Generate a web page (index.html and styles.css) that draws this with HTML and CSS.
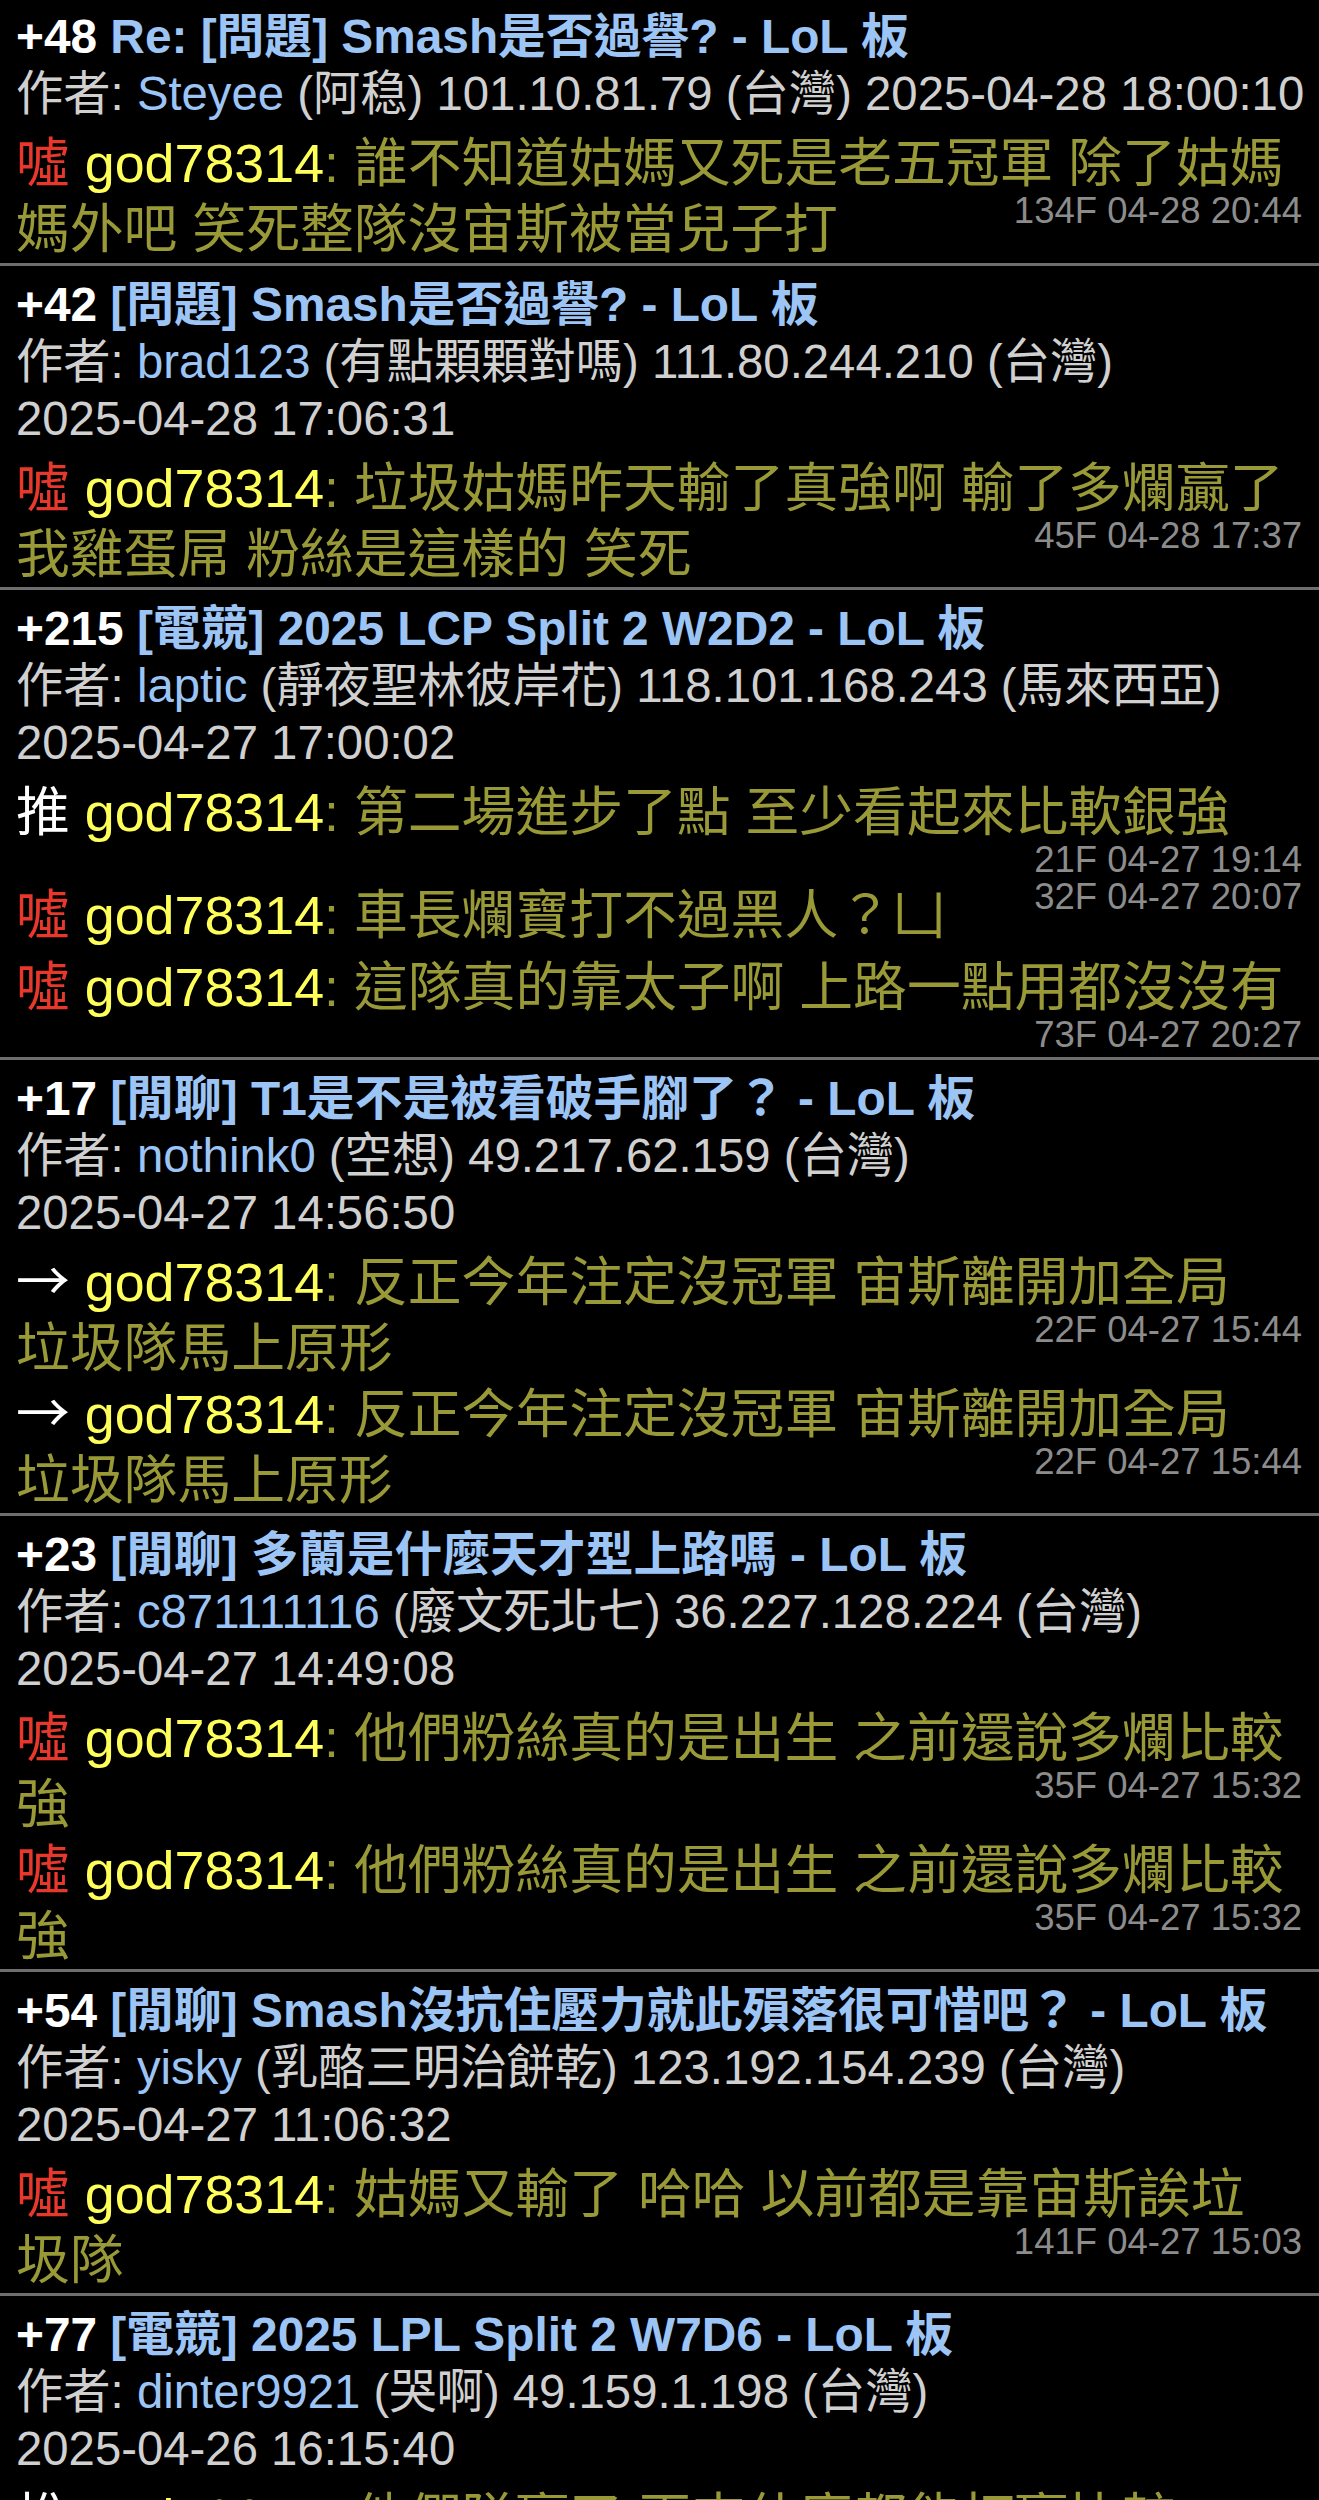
FILE: index.html
```html
<!DOCTYPE html>
<html lang="zh-Hant">
<head>
<meta charset="utf-8">
<title>god78314 推文</title>
<link rel="stylesheet" href="styles.css">
</head>
<body>
<div class="list">

  <div class="post post--first">
    <div class="title"><span class="score">+48</span> Re: [問題] Smash是否過譽? - LoL 板</div>
    <div class="meta">作者: <span class="aid">Steyee</span> (阿稳) 101.10.81.79 (台灣) 2025-04-28 18:00:10</div>
    <div class="pushes">
      <div class="push"><span class="tag tag--boo">噓</span> <span class="uid">god78314</span><span class="txt">: 誰不知道姑媽又死是老五冠軍 除了姑媽<br>媽外吧 笑死整隊沒宙斯被當兒子打</span><span class="time">134F 04-28 20:44</span></div>
    </div>
  </div>

  <div class="post">
    <div class="title"><span class="score">+42</span> [問題] Smash是否過譽? - LoL 板</div>
    <div class="meta">作者: <span class="aid">brad123</span> (有點顆顆對嗎) 111.80.244.210 (台灣)<br>2025-04-28 17:06:31</div>
    <div class="pushes">
      <div class="push"><span class="tag tag--boo">噓</span> <span class="uid">god78314</span><span class="txt">: 垃圾姑媽昨天輸了真強啊 輸了多爛贏了<br>我雞蛋屌 粉絲是這樣的 笑死</span><span class="time">45F 04-28 17:37</span></div>
    </div>
  </div>

  <div class="post">
    <div class="title"><span class="score">+215</span> [電競] 2025 LCP Split 2 W2D2 - LoL 板</div>
    <div class="meta">作者: <span class="aid">laptic</span> (靜夜聖林彼岸花) 118.101.168.243 (馬來西亞)<br>2025-04-27 17:00:02</div>
    <div class="pushes">
      <div class="push push--loose"><span class="tag">推</span> <span class="uid">god78314</span><span class="txt">: 第二場進步了點 至少看起來比軟銀強</span><span class="time">21F 04-27 19:14</span></div>
      <div class="push"><span class="tag tag--boo">噓</span> <span class="uid">god78314</span><span class="txt">: 車長爛寶打不過黑人？凵</span><span class="time">32F 04-27 20:07</span></div>
      <div class="push push--loose"><span class="tag tag--boo">噓</span> <span class="uid">god78314</span><span class="txt">: 這隊真的靠太子啊 上路一點用都沒沒有</span><span class="time">73F 04-27 20:27</span></div>
    </div>
  </div>

  <div class="post">
    <div class="title"><span class="score">+17</span> [閒聊] T1是不是被看破手腳了？ - LoL 板</div>
    <div class="meta">作者: <span class="aid">nothink0</span> (空想) 49.217.62.159 (台灣)<br>2025-04-27 14:56:50</div>
    <div class="pushes">
      <div class="push"><span class="tag tag--arrow">→</span> <span class="uid">god78314</span><span class="txt">: 反正今年注定沒冠軍 宙斯離開加全局<br>垃圾隊馬上原形</span><span class="time">22F 04-27 15:44</span></div>
      <div class="push"><span class="tag tag--arrow">→</span> <span class="uid">god78314</span><span class="txt">: 反正今年注定沒冠軍 宙斯離開加全局<br>垃圾隊馬上原形</span><span class="time">22F 04-27 15:44</span></div>
    </div>
  </div>

  <div class="post">
    <div class="title"><span class="score">+23</span> [閒聊] 多蘭是什麼天才型上路嗎 - LoL 板</div>
    <div class="meta">作者: <span class="aid">c871111116</span> (廢文死北七) 36.227.128.224 (台灣)<br>2025-04-27 14:49:08</div>
    <div class="pushes">
      <div class="push"><span class="tag tag--boo">噓</span> <span class="uid">god78314</span><span class="txt">: 他們粉絲真的是出生 之前還說多爛比較<br>強</span><span class="time">35F 04-27 15:32</span></div>
      <div class="push"><span class="tag tag--boo">噓</span> <span class="uid">god78314</span><span class="txt">: 他們粉絲真的是出生 之前還說多爛比較<br>強</span><span class="time">35F 04-27 15:32</span></div>
    </div>
  </div>

  <div class="post">
    <div class="title"><span class="score">+54</span> [閒聊] Smash沒抗住壓力就此殞落很可惜吧？ - LoL 板</div>
    <div class="meta">作者: <span class="aid">yisky</span> (乳酪三明治餅乾) 123.192.154.239 (台灣)<br>2025-04-27 11:06:32</div>
    <div class="pushes">
      <div class="push"><span class="tag tag--boo">噓</span> <span class="uid">god78314</span><span class="txt">: 姑媽又輸了 哈哈 以前都是靠宙斯誒垃<br>圾隊</span><span class="time">141F 04-27 15:03</span></div>
    </div>
  </div>

  <div class="post">
    <div class="title"><span class="score">+77</span> [電競] 2025 LPL Split 2 W7D6 - LoL 板</div>
    <div class="meta">作者: <span class="aid">dinter9921</span> (哭啊) 49.159.1.198 (台灣)<br>2025-04-26 16:15:40</div>
    <div class="pushes">
      <div class="push"><span class="tag">推</span> <span class="uid">god78314</span><span class="txt">: 他們隊贏了 再來什麼都能打贏比較</span><span class="time">12F 04-26 16:40</span></div>
    </div>
  </div>

</div>
</body>
</html>
```

FILE: styles.css
```css
html, body {
  margin: 0;
  padding: 0;
  background: #000;
}

body {
  font-family: "Liberation Sans", "Noto Sans CJK TC", sans-serif;
  color: #d0d0d0;
}

.post {
  padding: 10px 8px 0 16px;
  border-bottom: 3px solid #6e6e6e;
}

.post--first {
  padding-top: 8px;
  padding-bottom: 1px;
}

.title {
  font-size: 47.8px;
  line-height: 57px;
  font-weight: 700;
  color: #9cc5f5;
}

.score {
  color: #ffffff;
}

.meta {
  font-size: 47.3px;
  line-height: 57px;
  color: #d0d0d0;
}

.aid {
  color: #9cc5f5;
}

.pushes {
  margin-top: 8px;
}

.push {
  display: flow-root;
  font-size: 53.8px;
  line-height: 66px;
}

.push--loose {
  margin-top: 5.5px;
}

.tag {
  display: inline-block;
  width: 1em;
  color: #ffffff;
}

.tag--boo {
  color: #e8382c;
}

.tag--arrow {
  font-family: "Noto Sans CJK TC", sans-serif;
  line-height: 50px;
}

.uid {
  color: #ffff5a;
}

.txt {
  color: #999938;
}

.time {
  float: right;
  font-size: 36.5px;
  line-height: 30px;
  margin: 0 9px 7px 0;
  color: #8c8c8c;
}
```
